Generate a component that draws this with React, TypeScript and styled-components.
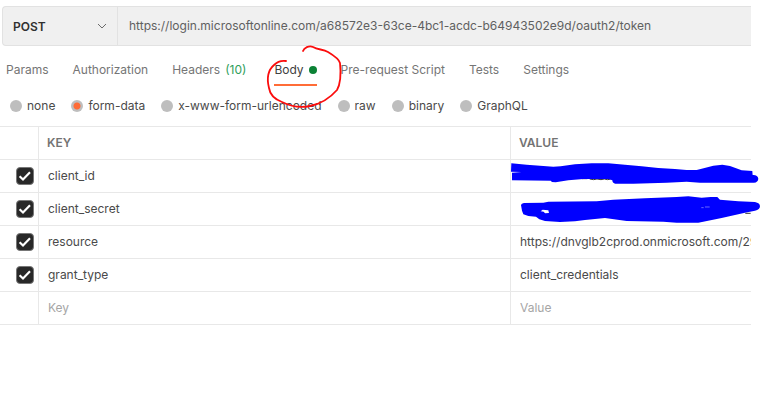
import React, { useState } from "react";
import styled, { createGlobalStyle } from "styled-components";

const GlobalStyle = createGlobalStyle`
  *, *::before, *::after { box-sizing: border-box; }
  body {
    margin: 0;
    background: #fff;
    color: #4a4a4a;
    font: 12px/16px Inter, "Liberation Sans", sans-serif;
    overflow-x: hidden;
  }
  input, select, button { font: inherit; color: inherit; }
`;

const Page = styled.div`
  position: relative;
  padding: 6px 9px 0 0;
`;

const RequestBar = styled.form`
  display: flex;
  height: 40px;
  margin-left: 2px;
  background: #f0f0f0;
  border: 1px solid #e2e2e2;
  border-right: 0;
  border-radius: 4px 0 0 4px;
`;

const MethodBox = styled.div`
  display: grid;
  align-items: center;
  flex: none;
  width: 115px;
  border-right: 1px solid #e2e2e2;

  & > * { grid-area: 1 / 1; }
  & > svg { justify-self: end; margin-right: 10px; pointer-events: none; }
`;

const MethodSelect = styled.select`
  appearance: none;
  width: 100%;
  height: 100%;
  padding: 2px 10px 0;
  border: 0;
  outline: 0;
  background: transparent;
  color: #303030;
  font-weight: 600;
`;

const UrlInput = styled.input`
  flex: 1;
  min-width: 0;
  padding: 0 0 0 11px;
  border: 0;
  outline: 0;
  background: transparent;
  color: #606060;
`;

const Tabs = styled.nav`
  display: flex;
  gap: 24px;
  padding: 8px 6px 0;
`;

const Tab = styled.button<{ $active?: boolean }>`
  display: flex;
  align-items: center;
  gap: 5px;
  height: 32px;
  padding: 2px 0 0;
  border: 0;
  border-bottom: 2px solid ${(p) => (p.$active ? "#ff6c37" : "transparent")};
  background: none;
  color: ${(p) => (p.$active ? "#404040" : "#757575")};
  white-space: nowrap;
`;

const Count = styled.span`
  padding-right: 4px;
  color: #2f9e5b;
`;

const Dot = styled.span`
  width: 8px;
  height: 8px;
  border-radius: 50%;
  background: #0b8235;
`;

const BodyTypes = styled.div`
  display: flex;
  gap: 16px;
  height: 40px;
  align-items: center;
  padding-left: 10px;
`;

const RadioLabel = styled.label`
  display: flex;
  align-items: center;
  gap: 5px;
  white-space: nowrap;
`;

const Radio = styled.input`
  appearance: none;
  width: 12px;
  height: 12px;
  margin: 0;
  border-radius: 50%;
  background: #bebebe;

  &:checked {
    background: radial-gradient(circle, #ff6c37 0 3px, #bebebe 4px);
  }
`;

const Table = styled.table`
  width: 100%;
  table-layout: fixed;
  border-collapse: separate;
  border-spacing: 0;
  border-top: 1px solid #e8e8e8;
`;

const CheckCol = styled.col`
  width: 39px;
`;

const KeyCol = styled.col`
  width: 472px;
`;

const Heading = styled.th`
  height: 33px;
  padding: 0 8px;
  border-bottom: 1px solid #e8e8e8;
  color: #737373;
  font-weight: 600;
  text-align: left;

  &:not(:last-child) { border-right: 1px solid #e8e8e8; }
`;

const Cell = styled.td`
  height: 33px;
  padding: 0;
  border-bottom: 1px solid #e8e8e8;

  &:not(:last-child) { border-right: 1px solid #e8e8e8; }
`;

const CellInput = styled.input`
  display: block;
  width: 100%;
  height: 32px;
  padding: 0 0 2px 9px;
  border: 0;
  outline: 0;
  background: transparent;

  &::placeholder { color: #a6a6a6; opacity: 1; }
`;

const CheckBox = styled.span`
  display: grid;
  width: 18px;
  height: 18px;
  margin-left: 16px;

  & > * { grid-area: 1 / 1; }
  & > svg { pointer-events: none; }
`;

const Check = styled.input`
  appearance: none;
  width: 18px;
  height: 18px;
  margin: 0;
  border: 1px solid #777;
  border-radius: 4px;
  background: #fff;

  &:checked { background: #282828; }
  & + svg { visibility: hidden; }
  &:checked + svg { visibility: visible; }
`;

const Markup = styled.svg`
  position: absolute;
  top: 0;
  left: 0;
  pointer-events: none;
`;

const bodyTypes = ["none", "form-data", "x-www-form-urlencoded", "raw", "binary", "GraphQL"];

const rows = [
  { key: "client_id", value: "" },
  { key: "client_secret", value: "" },
  { key: "resource", value: "https://dnvglb2cprod.onmicrosoft.com/29" },
  { key: "grant_type", value: "client_credentials" },
];

function Annotations() {
  return (
    <Markup width="760" height="411" viewBox="0 0 760 411" aria-hidden="true">
      <path
        d="M286 61 Q279 60 274 65 C267 71 267 80 269 88 C270 95 274 99 282 102 C290 106 301 108 310 106 C320 104 330 98 337 90 C341 83 341 73 340 63 C339 59 333 55 328 52 C323 49 318 50 313 47 C309 45 304 48 303 51"
        fill="none"
        stroke="#fb0d0d"
        strokeWidth="1.8"
        strokeLinecap="round"
        strokeLinejoin="round"
      />
      <g transform="translate(500 150) scale(0.3333)">
        <path
          d="M246 86h16M269 87l12 2 10-2M291 87l12 2 10-2M313 87l10 2 9-2M736 190h16"
          fill="none"
          stroke="#333"
          strokeWidth="3"
        />
        <path
          d="M34 40 L80 44 160 50 182 49 225 43 275 40 325 40 375 44 425 49 475 54 525 57 560 60 590 60 605 56 640 47 667 44 690 48 725 61 757 63 758 75 Q773 74 775 86 Q774 97 762 98 L600 98 560 95 500 98 400 101 346 101 Q337 100 337 91 L325 87 250 87 205 91 167 97 156 96 152 92 36 91 36 68 65 66 33 65Z"
          fill="#0000ff"
        />
        <path
          fillRule="evenodd"
          d="M63 165 Q64 160 72 159 L130 158 145 155 290 154 340 149 435 145 530 141 565 139 605 143 632 141 652 141 660 149 715 154 765 156 Q780 159 780 169 Q780 179 765 182 L735 188 665 204 595 218 530 218 490 215 380 213 315 204 255 210 225 214 180 216 135 213 118 208 108 200 85 198 70 193 66 182Z M122 184 L128 179 145 181 147 189 135 190 131 185Z"
          fill="#0000ff"
        />
        <path d="M604 173h7M615 171h14" stroke="#9c9cff" strokeWidth="2" />
      </g>
    </Markup>
  );
}

export default function App() {
  const [bodyType, setBodyType] = useState("form-data");

  return (
    <Page>
      <GlobalStyle />
      <RequestBar>
        <MethodBox>
          <MethodSelect aria-label="Method" defaultValue="POST">
            <option>GET</option>
            <option>POST</option>
          </MethodSelect>
          <svg width="10" height="6" viewBox="0 0 10 6" fill="none" stroke="#6b6b6b">
            <path d="M1 1l4 4 4-4" />
          </svg>
        </MethodBox>
        <UrlInput
          aria-label="Request URL"
          defaultValue="https://login.microsoftonline.com/a68572e3-63ce-4bc1-acdc-b64943502e9d/oauth2/token"
        />
      </RequestBar>

      <Tabs>
        <Tab>Params</Tab>
        <Tab>Authorization</Tab>
        <Tab>
          Headers <Count>(10)</Count>
        </Tab>
        <Tab $active>
          Body <Dot />
        </Tab>
        <Tab>Pre-request Script</Tab>
        <Tab>Tests</Tab>
        <Tab>Settings</Tab>
      </Tabs>

      <BodyTypes role="radiogroup" aria-label="Body type">
        {bodyTypes.map((type) => (
          <RadioLabel key={type}>
            <Radio
              type="radio"
              name="bodyType"
              checked={bodyType === type}
              onChange={() => setBodyType(type)}
            />
            {type}
          </RadioLabel>
        ))}
      </BodyTypes>

      <Table>
        <colgroup>
          <CheckCol />
          <KeyCol />
          <col />
        </colgroup>
        <thead>
          <tr>
            <Heading />
            <Heading>KEY</Heading>
            <Heading>VALUE</Heading>
          </tr>
        </thead>
        <tbody>
          {rows.map((row) => (
            <tr key={row.key}>
              <Cell>
                <CheckBox>
                  <Check type="checkbox" defaultChecked aria-label={`Include ${row.key}`} />
                  <svg width="18" height="18" viewBox="0 0 18 18" fill="none" stroke="#fff" strokeWidth="2.2">
                    <path d="M3.6 9.2l3.4 3.3 7-7.2" />
                  </svg>
                </CheckBox>
              </Cell>
              <Cell>
                <CellInput aria-label="Key" defaultValue={row.key} />
              </Cell>
              <Cell>
                <CellInput aria-label={`Value of ${row.key}`} defaultValue={row.value} />
              </Cell>
            </tr>
          ))}
          <tr>
            <Cell />
            <Cell>
              <CellInput aria-label="New key" placeholder="Key" />
            </Cell>
            <Cell>
              <CellInput aria-label="New value" placeholder="Value" />
            </Cell>
          </tr>
        </tbody>
      </Table>
      <Annotations />
    </Page>
  );
}
